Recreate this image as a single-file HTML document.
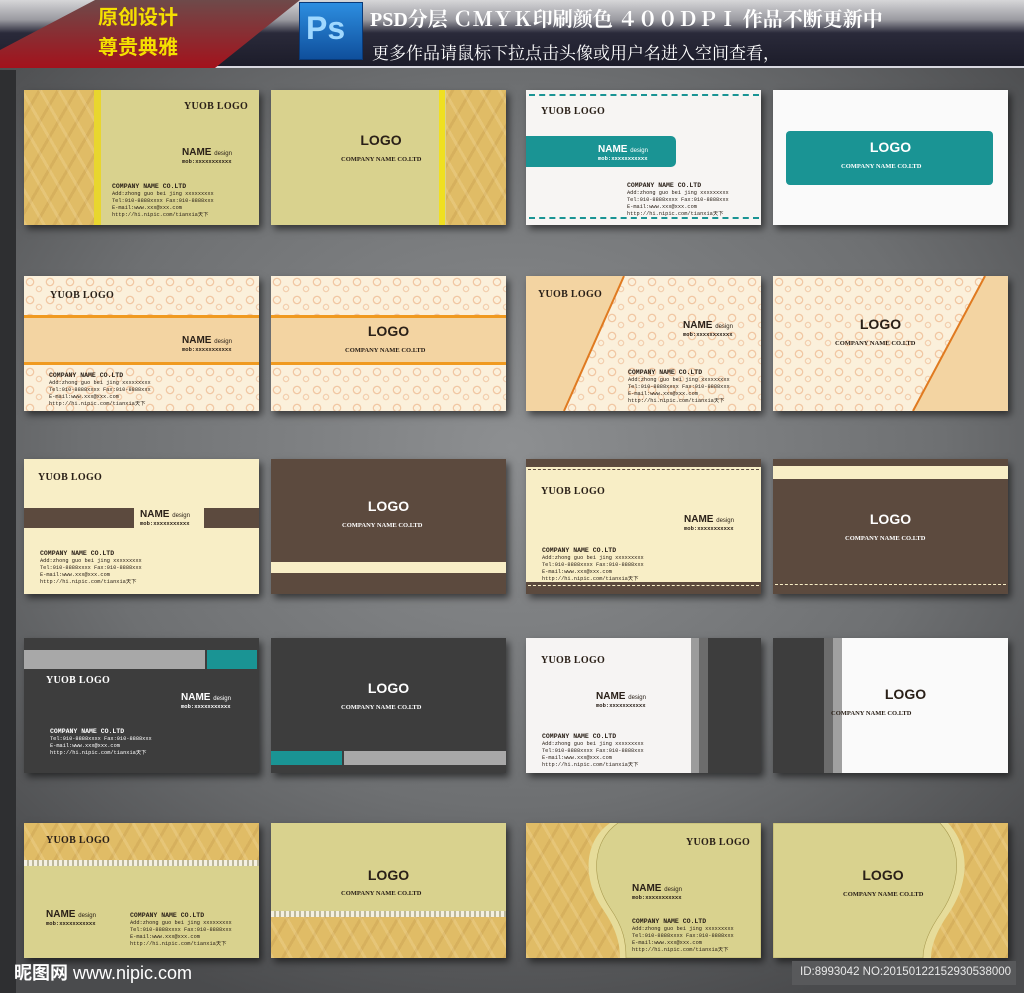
<!DOCTYPE html>
<html><head><meta charset="utf-8"><style>
*{margin:0;padding:0;box-sizing:border-box}
body{width:1024px;height:993px;overflow:hidden;position:relative;background:radial-gradient(ellipse 70% 60% at 50% 45%,#8d8f91 0%,#6e7072 60%,#4a4b4d 100%);font-family:"Liberation Sans","Noto Sans CJK SC",sans-serif}
.hd{position:absolute;left:0;top:0;width:1024px;height:68px;background:linear-gradient(#d6d6d8 0%,#9a9aa0 30%,#2a2a3a 50%,#1c1c2a 100%);border-bottom:2px solid #d8d8e0}
.ls{position:absolute;left:0;top:70px;width:16px;height:923px;background:#2e2f31}
.c{position:absolute;width:235px;height:135px;overflow:hidden;box-shadow:3px 4px 7px rgba(0,0,0,.55)}
.a{position:absolute}
.t{position:absolute;white-space:nowrap;color:#2a2018;line-height:1}
.yl{font-family:"Liberation Serif",serif;font-weight:bold;font-size:10px;letter-spacing:.3px}
.nm{font-weight:bold;font-size:10px}.nm small{font-size:6px;font-weight:normal}
.mb{font-size:5.5px;display:block;margin-top:1px;font-family:"Liberation Mono",monospace}
.inf{font-family:"Liberation Mono",monospace;font-size:5.3px;line-height:7px}
.inf b{font-size:6.5px}
.lg{font-weight:bold;font-size:14px;text-align:center;width:100%;left:0}
.cn{font-family:"Liberation Serif",serif;font-weight:bold;font-size:6.5px;text-align:center}
.w{color:#fff}
.arg{background-color:#e0bc66;background-image:repeating-linear-gradient(60deg,rgba(255,240,200,.18) 0 3px,transparent 3px 16px),repeating-linear-gradient(-60deg,rgba(160,110,40,.15) 0 3px,transparent 3px 16px)}
.kh{background:#d9d28e}
.pat{background-color:#fbf0db;background-image:radial-gradient(circle at 6px 6px,transparent 3px,#f1c7a3 3px,#f1c7a3 4px,transparent 4.5px),radial-gradient(circle at 15px 13px,transparent 2px,#f3d0b0 2px,#f3d0b0 3px,transparent 3.5px);background-size:20px 18px}
</style></head><body>
<div class="hd"></div>
<div class="ls"></div>
<svg class="a" style="left:0;top:0" width="300" height="68"><defs><linearGradient id="r" x1="0" y1="0" x2="0" y2="1"><stop offset="0" stop-color="#6e4a4a"/><stop offset="1" stop-color="#a3121c"/></linearGradient></defs><polygon points="95,0 300,0 215,68 0,68 0,50" fill="url(#r)"/></svg>
<div class="t" style="left:98px;top:8px;font-size:20px;font-weight:bold;color:#f4e000">原创设计</div>
<div class="t" style="left:98px;top:38px;font-size:20px;font-weight:bold;color:#f4e000">尊贵典雅</div>
<div class="a" style="left:299px;top:2px;width:64px;height:58px;background:linear-gradient(#2d8ee0,#0f4f9c);border:1px solid #0a3a78"></div>
<div class="t" style="left:306px;top:12px;font-size:32px;font-weight:bold;color:#9fd8ff">Ps</div>
<div class="t" style="left:370px;top:10px;font-size:20px;font-weight:bold;color:#fff;font-family:'Liberation Serif','Noto Serif CJK SC',serif">PSD分层 ＣＭＹＫ印刷颜色 ４００ＤＰＩ 作品不断更新中</div>
<div class="t" style="left:372px;top:45px;font-size:17px;color:#fff;font-family:'Liberation Serif','Noto Serif CJK SC',serif">更多作品请鼠标下拉点击头像或用户名进入空间查看，</div>

<!-- Row1 -->
<div class="c arg" style="left:24px;top:90px"><div class="a" style="left:70px;top:0;width:7px;height:135px;background:#e8d62e"></div><div class="a kh" style="left:77px;top:0;width:158px;height:135px"></div>
<div class="t yl" style="left:160px;top:12px">YUOB LOGO</div><div class="t nm" style="left:158px;top:58px">NAME <small>design</small><span class="mb">mob:xxxxxxxxxxx</span></div>
<div class="t inf" style="left:88px;top:93px"><b>COMPANY NAME CO.LTD</b><br>Add:zhong guo bei jing xxxxxxxxx<br>Tel:010-8888xxxx Fax:010-8888xxx<br>E-mail:www.xxx@xxx.com<br>http://hi.nipic.com/tianxia天下</div></div>
<div class="c kh" style="left:271px;top:90px"><div class="a arg" style="left:175px;top:0;width:60px;height:135px"></div><div class="a" style="left:168px;top:0;width:6px;height:135px;background:#f0e020"></div>
<div class="t lg" style="top:43px;width:220px">LOGO</div><div class="t cn" style="left:70px;top:67px">COMPANY NAME CO.LTD</div></div>
<div class="c" style="left:526px;top:90px;background:#f7f5f3"><div class="a" style="left:3px;top:4px;width:230px;border-top:2px dashed #1a9494"></div><div class="a" style="left:3px;top:127px;width:230px;border-top:2px dashed #1a9494"></div>
<div class="t yl" style="left:15px;top:17px">YUOB LOGO</div><div class="a" style="left:0;top:46px;width:150px;height:31px;background:#1a9494;border-radius:0 5px 5px 0"></div>
<div class="t nm w" style="left:72px;top:55px">NAME <small>design</small><span class="mb">mob:xxxxxxxxxxx</span></div>
<div class="t inf" style="left:101px;top:92px"><b>COMPANY NAME CO.LTD</b><br>Add:zhong guo bei jing xxxxxxxxx<br>Tel:010-8888xxxx Fax:010-8888xxx<br>E-mail:www.xxx@xxx.com<br>http://hi.nipic.com/tianxia天下</div></div>
<div class="c" style="left:773px;top:90px;background:#fafafa"><div class="a" style="left:13px;top:41px;width:207px;height:54px;background:#1a9494;border-radius:4px"></div>
<div class="t lg w" style="top:50px">LOGO</div><div class="t cn w" style="left:68px;top:74px">COMPANY NAME CO.LTD</div></div>

<!-- Row2 -->
<div class="c pat" style="left:24px;top:276px"><div class="a" style="left:0;top:39px;width:235px;height:50px;background:#f3d4a2;border-top:3px solid #f09a20;border-bottom:3px solid #f09a20"></div>
<div class="t yl" style="left:26px;top:15px">YUOB LOGO</div><div class="t nm" style="left:158px;top:60px">NAME <small>design</small><span class="mb">mob:xxxxxxxxxxx</span></div>
<div class="t inf" style="left:25px;top:96px"><b>COMPANY NAME CO.LTD</b><br>Add:zhong guo bei jing xxxxxxxxx<br>Tel:010-8888xxxx Fax:010-8888xxx<br>E-mail:www.xxx@xxx.com<br>http://hi.nipic.com/tianxia天下</div></div>
<div class="c pat" style="left:271px;top:276px"><div class="a" style="left:0;top:39px;width:235px;height:50px;background:#f3d4a2;border-top:3px solid #f09a20;border-bottom:3px solid #f09a20"></div>
<div class="t lg" style="top:48px">LOGO</div><div class="t cn" style="left:74px;top:72px">COMPANY NAME CO.LTD</div></div>
<div class="c pat" style="left:526px;top:276px"><svg class="a" width="235" height="135"><polygon points="0,0 98,0 38,135 0,135" fill="#f3d4a2"/><line x1="98" y1="0" x2="38" y2="135" stroke="#e07a20" stroke-width="2"/></svg>
<div class="t yl" style="left:12px;top:14px">YUOB LOGO</div><div class="t nm" style="left:157px;top:45px">NAME <small>design</small><span class="mb">mob:xxxxxxxxxxx</span></div>
<div class="t inf" style="left:102px;top:93px"><b>COMPANY NAME CO.LTD</b><br>Add:zhong guo bei jing xxxxxxxxx<br>Tel:010-8888xxxx Fax:010-8888xxx<br>E-mail:www.xxx@xxx.com<br>http://hi.nipic.com/tianxia天下</div></div>
<div class="c pat" style="left:773px;top:276px"><svg class="a" width="235" height="135"><polygon points="212,0 235,0 235,135 140,135" fill="#f3d4a2"/><line x1="212" y1="0" x2="140" y2="135" stroke="#e07a20" stroke-width="2"/></svg>
<div class="t lg" style="left:0;top:41px;width:215px">LOGO</div><div class="t cn" style="left:62px;top:65px">COMPANY NAME CO.LTD</div></div>

<!-- Row3 -->
<div class="c" style="left:24px;top:459px;background:#f8eec6"><div class="a" style="left:0;top:49px;width:110px;height:20px;background:#5c4a3e"></div><div class="a" style="left:180px;top:49px;width:55px;height:20px;background:#5c4a3e"></div>
<div class="t yl" style="left:14px;top:14px">YUOB LOGO</div><div class="t nm" style="left:116px;top:51px">NAME <small>design</small><span class="mb">mob:xxxxxxxxxxx</span></div>
<div class="t inf" style="left:16px;top:91px"><b>COMPANY NAME CO.LTD</b><br>Add:zhong guo bei jing xxxxxxxxx<br>Tel:010-8888xxxx Fax:010-8888xxx<br>E-mail:www.xxx@xxx.com<br>http://hi.nipic.com/tianxia天下</div></div>
<div class="c" style="left:271px;top:459px;background:#5c4a3e"><div class="a" style="left:0;top:103px;width:235px;height:11px;background:#f8eec6"></div>
<div class="t lg w" style="top:40px">LOGO</div><div class="t cn w" style="left:71px;top:64px">COMPANY NAME CO.LTD</div></div>
<div class="c" style="left:526px;top:459px;background:#f8eec6"><div class="a" style="left:0;top:0;width:235px;height:8px;background:#5c4a3e"></div><div class="a" style="left:0;top:123px;width:235px;height:12px;background:#5c4a3e"></div>
<div class="a" style="left:2px;top:10px;width:231px;border-top:1px dashed #5c4a3e"></div><div class="a" style="left:2px;top:126px;width:231px;border-top:1px dashed #f8eec6"></div>
<div class="t yl" style="left:15px;top:28px">YUOB LOGO</div><div class="t nm" style="left:158px;top:56px">NAME <small>design</small><span class="mb">mob:xxxxxxxxxxx</span></div>
<div class="t inf" style="left:16px;top:88px"><b>COMPANY NAME CO.LTD</b><br>Add:zhong guo bei jing xxxxxxxxx<br>Tel:010-8888xxxx Fax:010-8888xxx<br>E-mail:www.xxx@xxx.com<br>http://hi.nipic.com/tianxia天下</div></div>
<div class="c" style="left:773px;top:459px;background:#5c4a3e"><div class="a" style="left:0;top:7px;width:235px;height:13px;background:#f8eec6"></div><div class="a" style="left:2px;top:125px;width:231px;border-top:1px dashed #f8eec6"></div>
<div class="t lg w" style="top:53px">LOGO</div><div class="t cn w" style="left:72px;top:77px">COMPANY NAME CO.LTD</div></div>

<!-- Row4 -->
<div class="c" style="left:24px;top:638px;background:#3d3d3d"><div class="a" style="left:0;top:12px;width:181px;height:19px;background:#a8a8a8"></div><div class="a" style="left:183px;top:12px;width:50px;height:19px;background:#1a9494"></div>
<div class="t yl w" style="left:22px;top:38px">YUOB LOGO</div><div class="t nm w" style="left:157px;top:55px">NAME <small>design</small><span class="mb">mob:xxxxxxxxxxx</span></div>
<div class="t inf w" style="left:26px;top:90px"><b>COMPANY NAME CO.LTD</b><br>Tel:010-8888xxxx Fax:010-8888xxx<br>E-mail:www.xxx@xxx.com<br>http://hi.nipic.com/tianxia天下</div></div>
<div class="c" style="left:271px;top:638px;background:#3d3d3d"><div class="a" style="left:0;top:113px;width:71px;height:14px;background:#1a9494"></div><div class="a" style="left:73px;top:113px;width:162px;height:14px;background:#a8a8a8"></div>
<div class="t lg w" style="top:43px">LOGO</div><div class="t cn w" style="left:70px;top:67px">COMPANY NAME CO.LTD</div></div>
<div class="c" style="left:526px;top:638px;background:#f6f4f3"><div class="a" style="left:165px;top:0;width:8px;height:135px;background:#9c9c9c"></div><div class="a" style="left:173px;top:0;width:9px;height:135px;background:#6c6c6c"></div><div class="a" style="left:182px;top:0;width:53px;height:135px;background:#3d3d3d"></div>
<div class="t yl" style="left:15px;top:18px">YUOB LOGO</div><div class="t nm" style="left:70px;top:54px">NAME <small>design</small><span class="mb">mob:xxxxxxxxxxx</span></div>
<div class="t inf" style="left:16px;top:95px"><b>COMPANY NAME CO.LTD</b><br>Add:zhong guo bei jing xxxxxxxxx<br>Tel:010-8888xxxx Fax:010-8888xxx<br>E-mail:www.xxx@xxx.com<br>http://hi.nipic.com/tianxia天下</div></div>
<div class="c" style="left:773px;top:638px;background:#fafafa"><div class="a" style="left:0;top:0;width:51px;height:135px;background:#3d3d3d"></div><div class="a" style="left:51px;top:0;width:9px;height:135px;background:#6c6c6c"></div><div class="a" style="left:60px;top:0;width:9px;height:135px;background:#a0a0a0"></div>
<div class="t lg" style="left:0;top:49px;width:265px">LOGO</div><div class="t cn" style="left:58px;top:73px">COMPANY NAME CO.LTD</div></div>

<!-- Row5 -->
<div class="c kh" style="left:24px;top:823px"><div class="a arg" style="left:0;top:0;width:235px;height:38px"></div><div class="a" style="left:0;top:37px;width:235px;height:6px;background:repeating-linear-gradient(90deg,#f4f0e0 0 3px,#bdb89a 3px 5px)"></div>
<div class="t yl" style="left:22px;top:13px">YUOB LOGO</div><div class="t nm" style="left:22px;top:87px">NAME <small>design</small><span class="mb">mob:xxxxxxxxxxx</span></div>
<div class="t inf" style="left:106px;top:89px"><b>COMPANY NAME CO.LTD</b><br>Add:zhong guo bei jing xxxxxxxxx<br>Tel:010-8888xxxx Fax:010-8888xxx<br>E-mail:www.xxx@xxx.com<br>http://hi.nipic.com/tianxia天下</div></div>
<div class="c kh" style="left:271px;top:823px"><div class="a arg" style="left:0;top:92px;width:235px;height:43px"></div><div class="a" style="left:0;top:88px;width:235px;height:6px;background:repeating-linear-gradient(90deg,#f4f0e0 0 3px,#bdb89a 3px 5px)"></div>
<div class="t lg" style="top:45px">LOGO</div><div class="t cn" style="left:70px;top:68px">COMPANY NAME CO.LTD</div></div>
<div class="c arg" style="left:526px;top:823px"><svg class="a" width="235" height="135"><path d="M84,0 C58,18 56,55 76,85 C90,105 94,120 94,135 L235,135 L235,0Z" fill="#e6dc9a"/><path d="M92,0 C66,18 64,55 84,85 C98,105 100,120 100,135 L235,135 L235,0Z" fill="#d9d28e" stroke="#a89a50" stroke-width=".6"/></svg>
<div class="t yl" style="left:160px;top:15px">YUOB LOGO</div><div class="t nm" style="left:106px;top:61px">NAME <small>design</small><span class="mb">mob:xxxxxxxxxxx</span></div>
<div class="t inf" style="left:106px;top:95px"><b>COMPANY NAME CO.LTD</b><br>Add:zhong guo bei jing xxxxxxxxx<br>Tel:010-8888xxxx Fax:010-8888xxx<br>E-mail:www.xxx@xxx.com<br>http://hi.nipic.com/tianxia天下</div></div>
<div class="c arg" style="left:773px;top:823px"><svg class="a" width="235" height="135"><path d="M175,0 C198,25 196,60 176,90 C162,110 158,125 158,135 L0,135 L0,0Z" fill="#e6dc9a"/><path d="M167,0 C190,25 188,60 168,90 C154,110 150,125 150,135 L0,135 L0,0Z" fill="#d9d28e" stroke="#a89a50" stroke-width=".6"/></svg>
<div class="t lg" style="left:0;top:45px;width:220px">LOGO</div><div class="t cn" style="left:70px;top:69px">COMPANY NAME CO.LTD</div></div>

<div class="t" style="left:14px;top:964px;font-size:18px;font-weight:bold;color:#fff">昵图网 <span style="font-weight:normal">www.nipic.com</span></div>
<div class="a" style="left:792px;top:961px;width:224px;height:24px;background:#58595b"></div>
<div class="t" style="left:800px;top:967px;font-size:11.5px;color:#e8e8e8">ID:8993042 NO:20150122152930538000</div>
</body></html>
